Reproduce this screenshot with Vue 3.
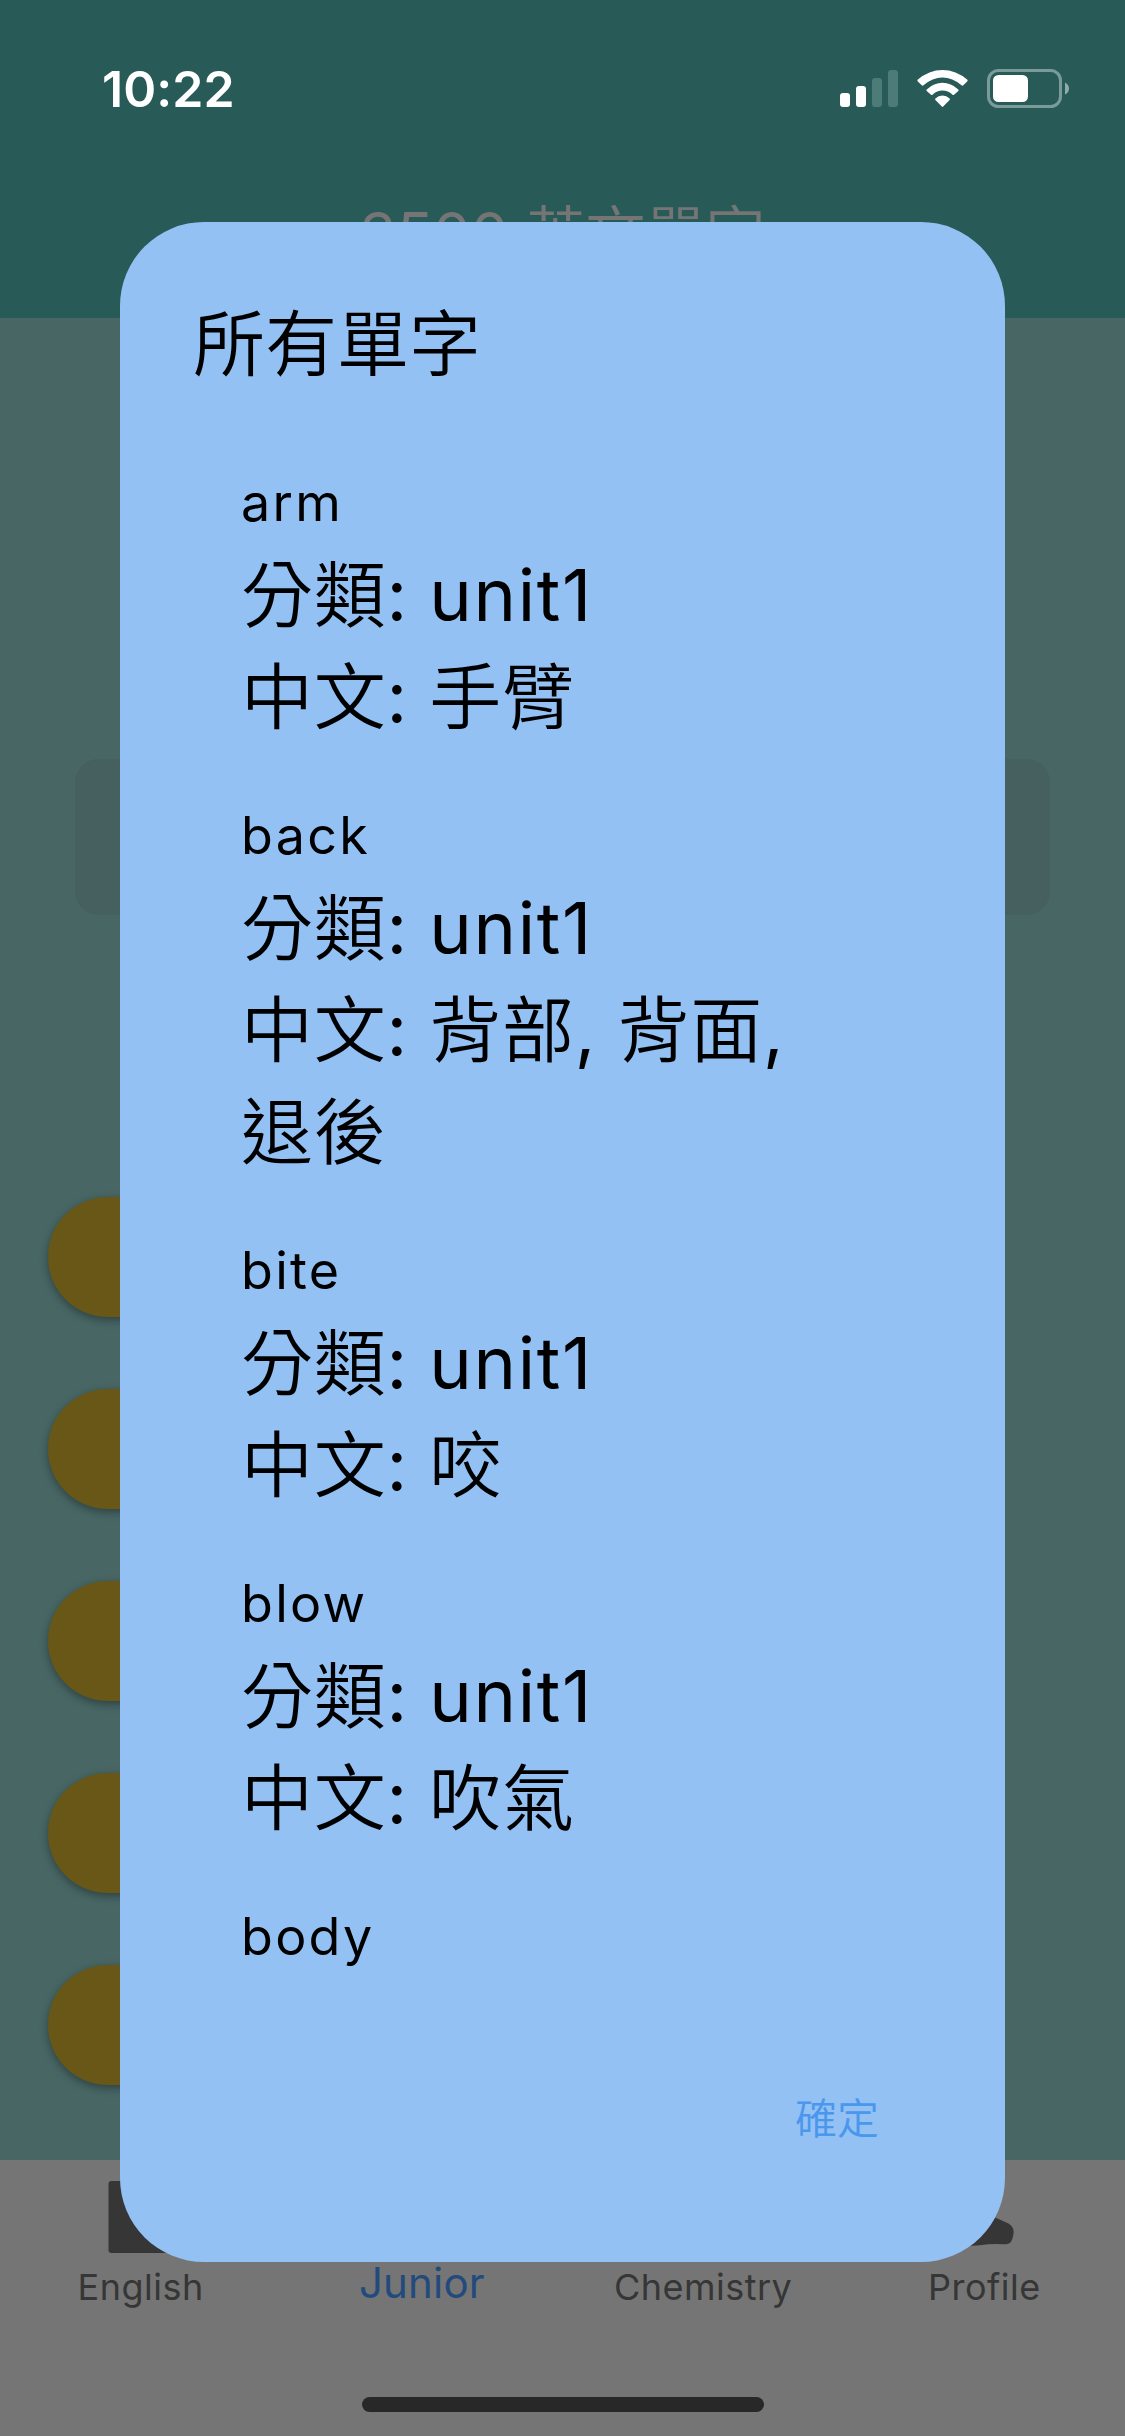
<script setup>
const words = [
  { word: 'arm', unit: 'unit1', meaning: '手臂' },
  { word: 'back', unit: 'unit1', meaning: '背部, 背面, 退後' },
  { word: 'bite', unit: 'unit1', meaning: '咬' },
  { word: 'blow', unit: 'unit1', meaning: '吹氣' },
  { word: 'body' },
]
</script>

<template>
  <div class="screen">
    <header class="top">
      <div class="status">
        <span class="time">10:22</span>
        <svg class="indicators" viewBox="840 66 230 44" width="230" height="44">
          <g fill="#fff">
            <rect x="840" y="93" width="10" height="14" rx="3" />
            <rect x="856" y="86" width="10" height="21" rx="3" />
            <g fill="#4c7b78">
              <rect x="872" y="78" width="10" height="29" rx="3" />
              <rect x="888" y="70" width="10" height="37" rx="3" />
            </g>
            <path d="M917.6 79.8Q929 70 942.5 70T967.4 79.8Q968 80.6 967.2 81.4L963 85.4Q962.3 86 961.5 85.3Q952.500 77.500 942.500 77.500T923.500 85.300Q922.700 86 922 85.400L917.800 81.400Q917 80.600 917.600 79.800Z" />
            <path d="M926.700 89.400Q934 82.800 942.500 82.800T958.300 89.400Q959 90.200 958.300 90.900L954 94.800Q953.300 95.300 952.500 94.700Q948 90.500 942.500 90.500T932.500 94.700Q931.700 95.300 931 94.800L926.700 90.900Q926 90.200 926.700 89.400Z" />
            <path d="M935.400 98.500Q938.500 95.500 942.500 95.500T949.600 98.500Q950.300 99.300 949.600 100L943.200 106.600Q942.500 107.300 941.800 106.600L935.400 100Q934.700 99.300 935.400 98.500Z" />
            <rect x="993" y="75" width="35" height="27" rx="5.500" />
          </g>
          <rect x="988.500" y="70.500" width="72" height="36" rx="10" fill="none" stroke="#7a9b99" stroke-width="3" />
          <path d="M1065 82.500Q1069 84.500 1069 88.500T1065 94.500Z" fill="#8fabaa" />
        </svg>
      </div>
      <div class="app-title">3500 英文單字</div>
    </header>

    <main class="page">
      <div class="card"></div>
      <div class="units">
        <div v-for="n in 5" :key="n" class="unit"></div>
      </div>
    </main>

    <nav class="tabs">
      <div class="tab">
        <svg class="tab-icon" viewBox="0 0 96 84" width="96" height="84">
          <rect x="15.500" y="9" width="66" height="72" rx="3" fill="#363636" />
        </svg>
        <span>English</span>
      </div>
      <div class="tab active"><span>Junior</span></div>
      <div class="tab"><span>Chemistry</span></div>
      <div class="tab">
        <svg class="tab-icon" viewBox="936 2172 96 84" width="96" height="84">
          <path d="M960 2212L994 2217L1008.500 2223.500Q1014.500 2227 1013.500 2234Q1012.500 2240 1010.500 2242.500Q1008.500 2244.500 1005 2244.300Q990 2243.500 982 2245Q972 2246.500 962 2245Z" fill="#363636" />
        </svg>
        <span>Profile</span>
      </div>
      <div class="home-bar"></div>
    </nav>

    <section class="dialog">
      <h1>所有單字</h1>
      <div class="list">
        <article v-for="w in words" :key="w.word">
          <h2>{{ w.word }}</h2>
          <p v-if="w.unit">分類: <span class="latin">{{ w.unit }}</span></p>
          <p v-if="w.meaning">中文: {{ w.meaning }}</p>
        </article>
      </div>
      <div class="actions"><button>確定</button></div>
    </section>
  </div>
</template>

<style>
body {
  margin: 0;
}
</style>

<style scoped>
.screen {
  position: relative;
  width: 1125px;
  height: 2436px;
  overflow: hidden;
  display: flex;
  flex-direction: column;
  background: #476664;
  font-family: Inter, "Noto Sans CJK TC DemiLight", "Noto Sans CJK TC", sans-serif;
}
.top {
  height: 318px;
  background: #285a57;
}
.status {
  height: 132px;
  box-sizing: border-box;
  padding: 66px 55px 0 102px;
  display: flex;
  justify-content: space-between;
  align-items: flex-start;
  color: #fff;
}
.time {
  font-size: 50px;
  font-weight: 600;
  line-height: 46px;
  letter-spacing: 0.1px;
}
.app-title {
  margin-top: 54px;
  line-height: 96px;
  text-align: center;
  font-size: 60px;
  color: #757575;
}
.page {
  height: 1842px;
  display: flex;
  flex-direction: column;
}
.card {
  margin: 441px 75px 0;
  height: 156px;
  border-radius: 24px;
  background: #465f5f;
}
.units {
  margin: 282px 48px 0;
  display: flex;
  flex-direction: column;
  gap: 72px;
}
.unit {
  width: 320px;
  height: 120px;
  border-radius: 60px;
  background: #695718;
  box-shadow: 0 3px 8px rgba(0, 0, 0, 0.35);
}
.tabs {
  height: 276px;
  background: #757575;
  display: flex;
  flex-wrap: wrap;
  align-content: flex-start;
}
.tab {
  width: 25%;
  height: 237px;
  display: flex;
  flex-direction: column;
  align-items: center;
  justify-content: flex-start;
  color: #363636;
  font-size: 36px;
  letter-spacing: 0.5px;
}
.tab-icon {
  height: 84px;
  margin-top: 12px;
}
.tab span {
  line-height: 40px;
  margin-top: 11px;
}
.tab span:first-child {
  margin-top: 107px;
}
.tab.active {
  font-size: 42px;
  letter-spacing: 0.2px;
  color: #234a7c;
}
.tab.active span {
  margin-top: 103px;
}
.home-bar {
  width: 402px;
  height: 15px;
  margin: 0 auto;
  border-radius: 8px;
  background: #282828;
}
.dialog {
  position: absolute;
  left: 120px;
  top: 222px;
  width: 885px;
  height: 2040px;
  box-sizing: border-box;
  padding: 74px 72px 0;
  border-radius: 84px;
  background: #93c1f3;
  color: #000;
  display: flex;
  flex-direction: column;
}
h1 {
  margin: 0 0 0 1px;
  font-size: 72px;
  font-weight: 400;
  line-height: 96px;
}
.list {
  margin-top: 73px;
  padding: 0 112px 0 49px;
  height: 1527px;
  overflow: hidden;
}
article {
  margin-bottom: 50px;
}
h2 {
  margin: 0 0 3px;
  font-size: 52px;
  font-weight: 400;
  line-height: 76px;
  letter-spacing: 2.3px;
}
p {
  margin: 0;
  font-size: 72px;
  line-height: 102px;
  letter-spacing: 0.8px;
}
.latin {
  letter-spacing: 1.7px;
}
.actions {
  display: flex;
  justify-content: flex-end;
  padding: 97px 54px 0 0;
}
button {
  border: 0;
  padding: 0;
  background: none;
  color: #4a97ee;
  font: 400 42px/60px Inter, "Noto Sans CJK TC DemiLight", "Noto Sans CJK TC", sans-serif;
}
</style>
